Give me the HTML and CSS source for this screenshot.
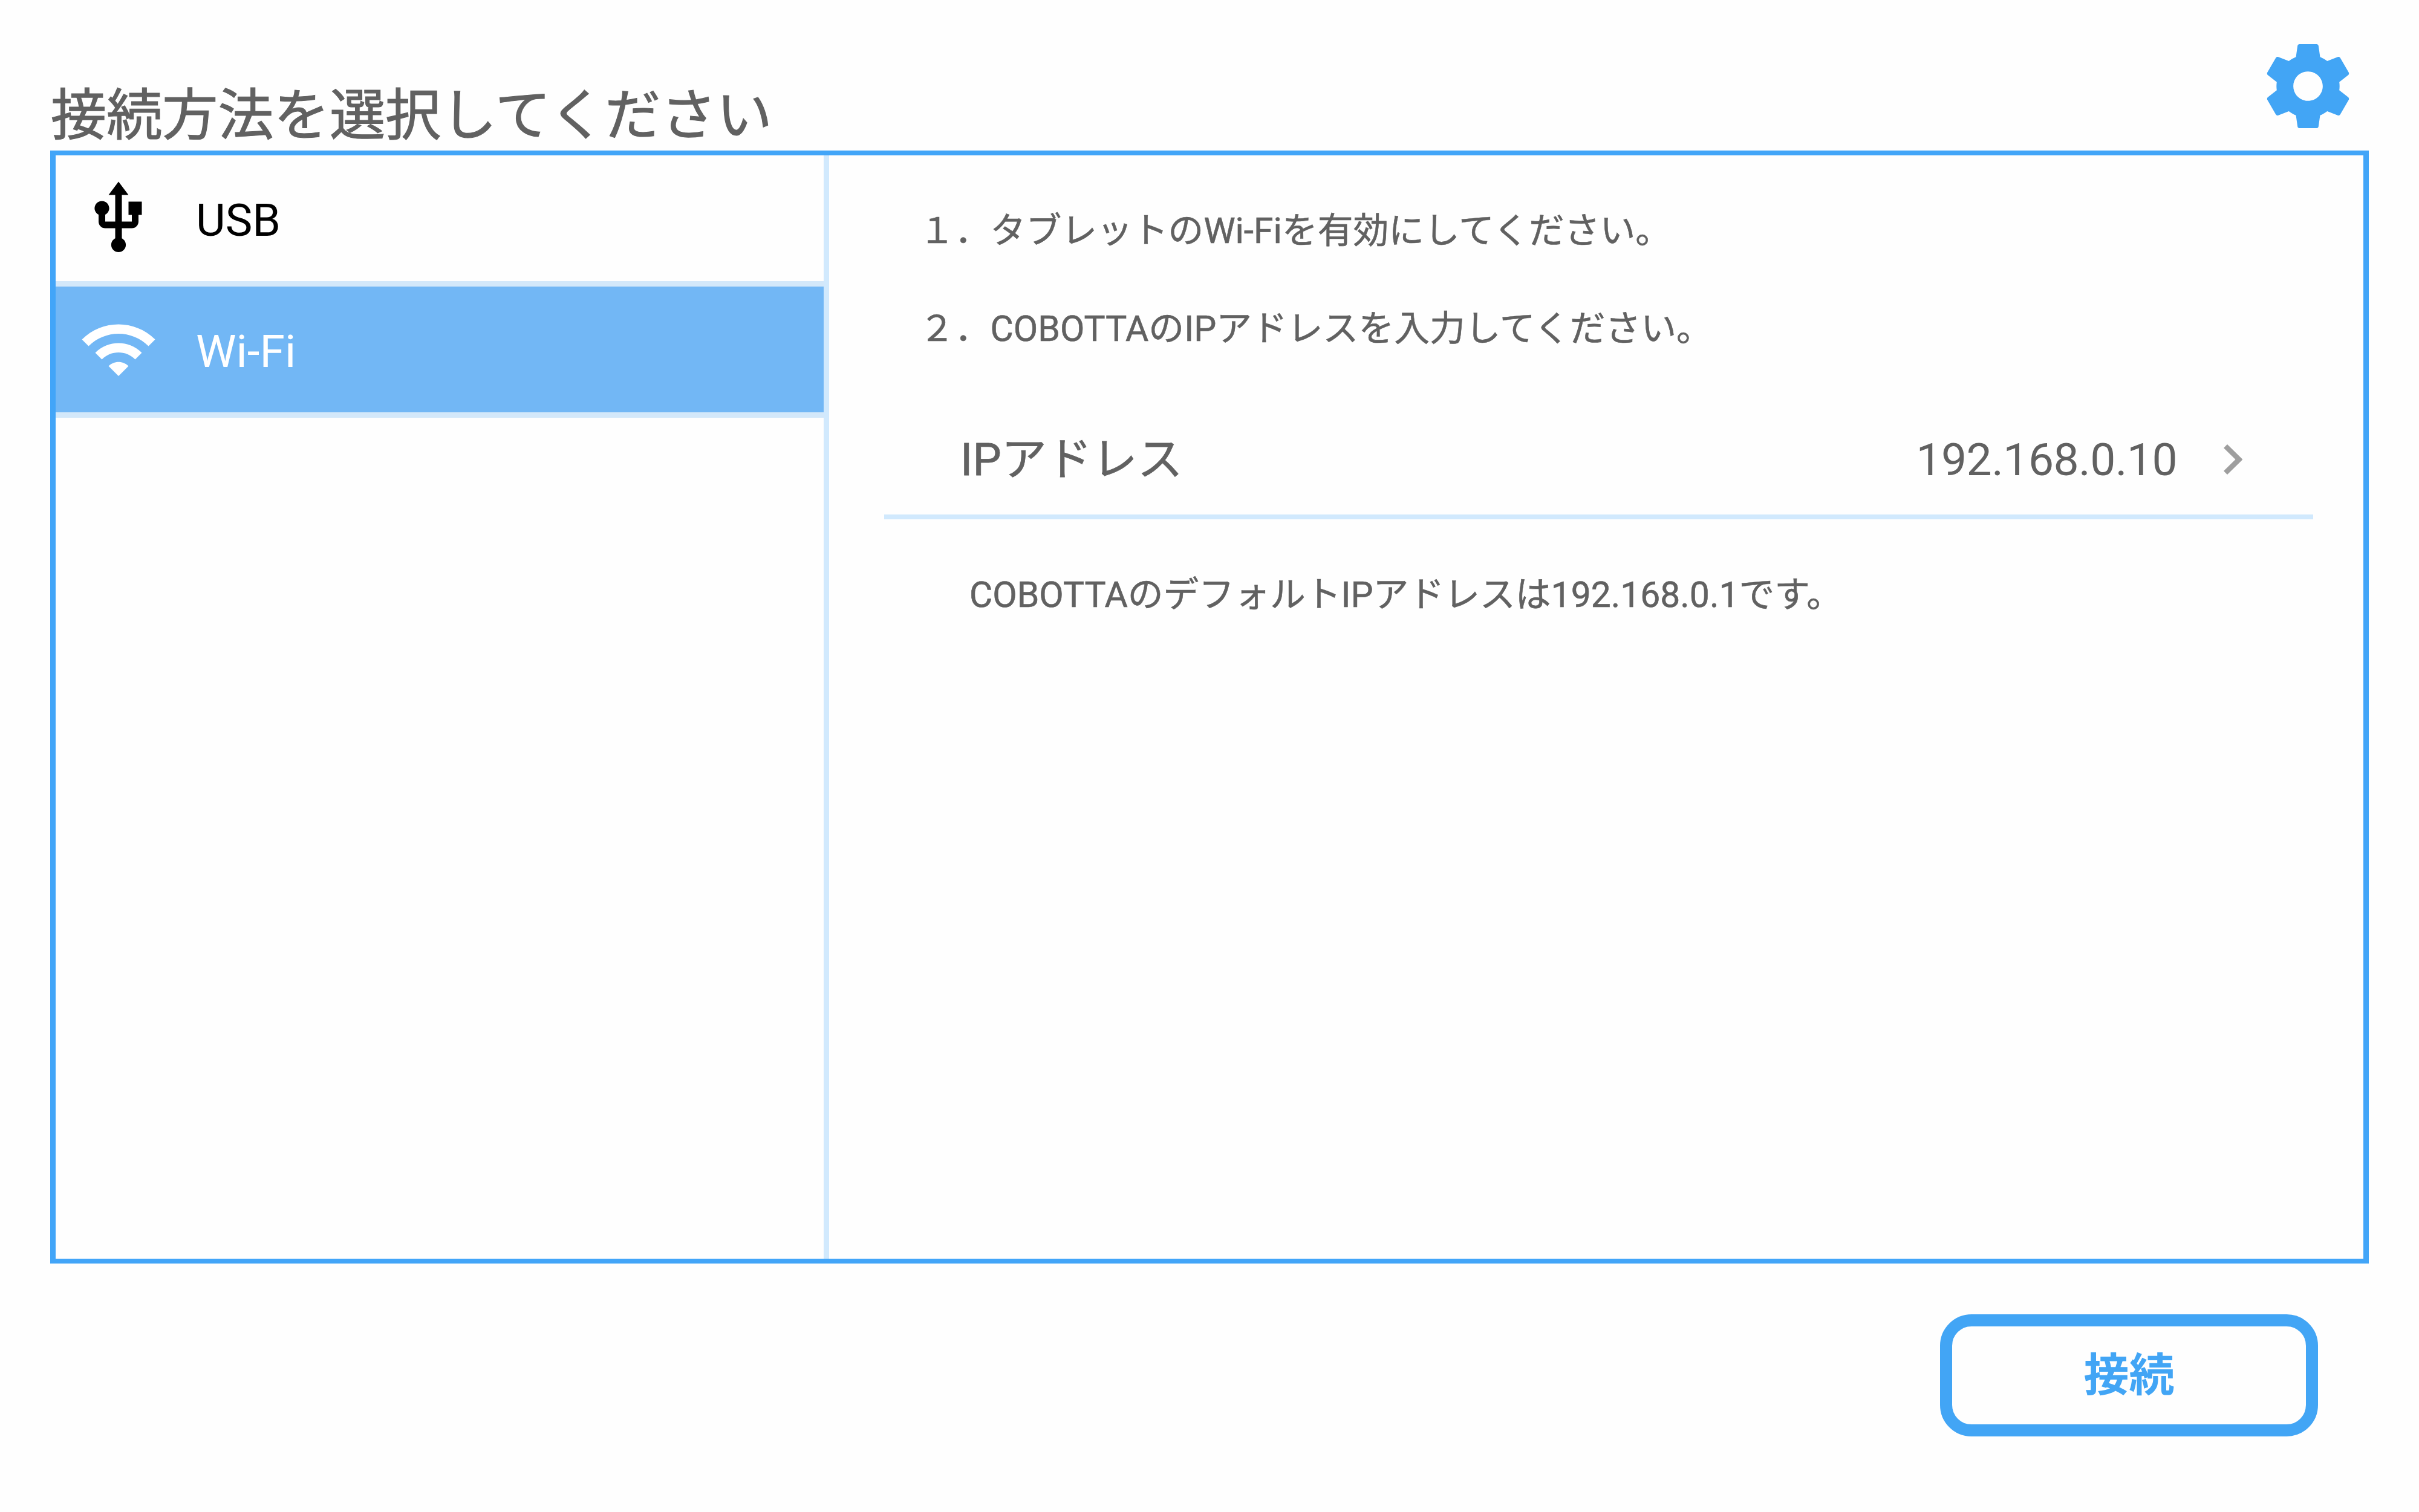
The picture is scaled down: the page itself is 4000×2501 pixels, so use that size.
FILE: index.html
```html
<!DOCTYPE html>
<html lang="ja">
<head>
    <meta charset="UTF-8">
    <meta name="viewport" content="width=device-width, initial-scale=1.0">
    <title>接続方法</title>
    <link rel="stylesheet" href="styles.css">
</head>
<body>

    <header class="header">
        <h1 class="title">接続方法を選択してください</h1>
        <button type="button" class="settings" aria-label="設定">
            <svg viewBox="0 0 24 24" fill="currentColor">
                <path d="M19.43 12.98c.04-.32.07-.64.07-.98s-.03-.66-.07-.98l2.11-1.65c.19-.15.24-.42.12-.64l-2-3.46c-.12-.22-.39-.3-.61-.22l-2.49 1c-.52-.4-1.08-.73-1.69-.98l-.38-2.65C14.46 2.18 14.25 2 14 2h-4c-.25 0-.46.18-.49.42l-.38 2.65c-.61.25-1.17.59-1.69.98l-2.49-1c-.23-.09-.49 0-.61.22l-2 3.46c-.13.22-.07.49.12.64l2.11 1.65c-.04.32-.07.65-.07.98s.03.66.07.98l-2.11 1.65c-.19.15-.24.42-.12.64l2 3.46c.12.22.39.3.61.22l2.49-1c.52.4 1.08.73 1.69.98l.38 2.65c.03.24.24.42.49.42h4c.25 0 .46-.18.49-.42l.38-2.65c.61-.25 1.17-.59 1.69-.98l2.49 1c.23.09.49 0 .61-.22l2-3.46c.12-.22.07-.49-.12-.64l-2.11-1.65zM12 15.5c-1.93 0-3.5-1.57-3.5-3.5s1.57-3.5 3.5-3.5 3.5 1.57 3.5 3.5-1.57 3.5-3.5 3.5z"/>
            </svg>
        </button>
    </header>

    <main class="panel">
        <!-- Connection types -->
        <ul class="menu">
            <li class="menu-item">
                <svg class="menu-icon" viewBox="0 0 24 24" fill="currentColor">
                    <path d="M15 7v4h1v2h-3V5h2l-3-4-3 4h2v8H8v-2.07c.7-.37 1.2-1.08 1.2-1.93 0-1.21-.99-2.2-2.2-2.2-1.21 0-2.2.99-2.2 2.2 0 .85.5 1.56 1.2 1.93V13c0 1.11.89 2 2 2h3v3.05c-.71.37-1.2 1.1-1.2 1.95 0 1.22.99 2.2 2.2 2.2 1.21 0 2.2-.98 2.2-2.2 0-.85-.49-1.58-1.2-1.95V15h3c1.11 0 2-.89 2-2v-2h1V7h-4z"/>
                </svg>
                <span class="menu-label">USB</span>
            </li>
            <li class="menu-item active">
                <svg class="menu-icon" viewBox="0 0 24 24" fill="currentColor">
                    <path d="M1 9l2 2c4.97-4.97 13.03-4.97 18 0l2-2C16.93 2.93 7.08 2.93 1 9zm8 8l3 3 3-3c-1.65-1.66-4.34-1.66-6 0zm-4-4l2 2c2.76-2.76 7.24-2.76 10 0l2-2C15.14 9.14 8.87 9.14 5 13z"/>
                </svg>
                <span class="menu-label">Wi-Fi</span>
            </li>
        </ul>

        <!-- Wi-Fi details -->
        <section class="details">
            <p class="step">１．タブレットのWi-Fiを有効にしてください。</p>
            <p class="step">２．COBOTTAのIPアドレスを入力してください。</p>

            <div class="ip-row">
                <span class="ip-label">IPアドレス</span>
                <span class="ip-value">192.168.0.10</span>
                <svg class="chevron" viewBox="0 0 31 50" fill="none" stroke="currentColor" stroke-width="8.5">
                    <path d="M3 3l22.5 22L3 47"/>
                </svg>
            </div>

            <p class="note">COBOTTAのデフォルトIPアドレスは192.168.0.1です。</p>
        </section>
    </main>

    <footer class="footer">
        <button type="button" class="connect">接続</button>
    </footer>

</body>
</html>
```
FILE: styles.css
```css
* {
    box-sizing: border-box;
}

body {
    margin: 0;
    height: 2501px;
    font-family: Roboto, "Noto Sans CJK JP", sans-serif;
    background-color: #fefefe;
    color: #616161;
}

h1, p, ul {
    margin: 0;
    padding: 0;
}

svg {
    display: block;
}

.header {
    display: flex;
    justify-content: space-between;
    align-items: flex-end;
    height: 249px;
    padding: 0 100px 0 84px;
}

.title {
    font-size: 92.2px;
    font-weight: 400;
    line-height: 114px;
    -webkit-text-stroke: 1.2px #616161;
}

.settings {
    width: 167px;
    height: 167px;
    margin-bottom: 23px;
    padding: 0;
    border: none;
    background: none;
    color: #42a5f5;
    cursor: pointer;
}

.panel {
    display: flex;
    height: 1841px;
    margin: 0 83px;
    border: 8px solid #42a5f8;
    border-width: 8px 9px;
}

.menu {
    width: 1279px;
    border-right: 9px solid #d1e9fd;
    list-style: none;
}

.menu-item {
    display: flex;
    align-items: center;
    gap: 62px;
    height: 217px;
    padding-left: 38px;
    border-bottom: 9px solid #d3e8fa;
    color: #000;
    font-size: 75px;
    cursor: pointer;
}

.menu-item.active {
    background-color: #72b7f5;
    color: #fff;
}

.menu-icon {
    width: 132px;
    height: 132px;
}

.menu-label {
    padding-top: 5px;
    line-height: 88px;
}

.details {
    flex: 1;
    padding: 44px 83px 0 91px;
}

.step {
    padding-left: 58px;
    font-size: 58.8px;
    line-height: 162px;
    white-space: nowrap;
    -webkit-text-stroke: 0.6px #616161;
}

.ip-row {
    display: flex;
    align-items: center;
    height: 186px;
    margin-top: 48px;
    padding: 0 117px 4px 126px;
    border-bottom: 8px solid #d1e9fd;
    font-size: 75px;
    line-height: 88px;
}

.ip-label {
    -webkit-text-stroke: 0.8px #616161;
}

.ip-value {
    margin-left: auto;
    letter-spacing: -0.6px;
}

.chevron {
    width: 31px;
    height: 50px;
    margin-left: 77px;
    color: #9e9e9e;
}

.note {
    margin-top: 85px;
    padding-left: 141px;
    font-size: 58.8px;
    line-height: 80px;
    white-space: nowrap;
    -webkit-text-stroke: 0.6px #616161;
}

.footer {
    display: flex;
    justify-content: flex-end;
    padding: 84px 167px 0 0;
}

.connect {
    width: 625px;
    height: 202px;
    padding: 0;
    border: 20.5px solid #42a5f5;
    border-radius: 52px;
    background-color: #fefefe;
    color: #42a5f5;
    font-family: inherit;
    font-size: 75px;
    font-weight: 700;
    line-height: 88px;
    cursor: pointer;
}
```
